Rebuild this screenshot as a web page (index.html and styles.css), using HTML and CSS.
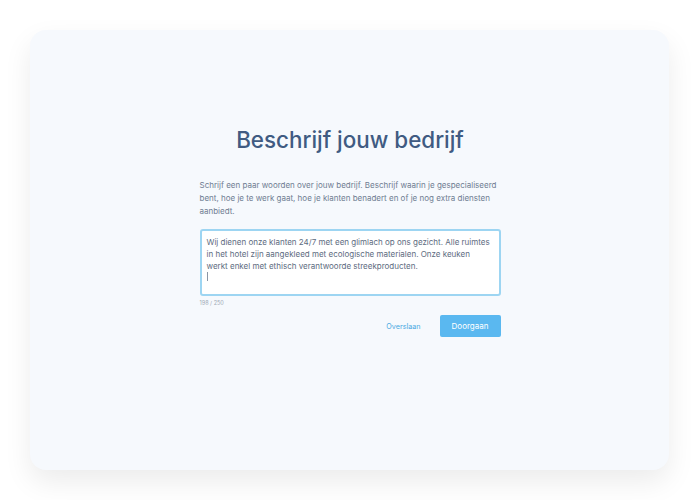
FILE: index.html
```html
<!DOCTYPE html>
<html lang="nl">

<head>
    <meta charset="UTF-8">
    <meta name="viewport" content="width=device-width, initial-scale=1.0">
    <title>Beschrijf jouw bedrijf</title>
    <link rel="stylesheet" href="styles.css">
</head>

<body>
    <div class="page">
        <div class="card">
            <div class="step">
                <h1>Beschrijf jouw bedrijf</h1>
                <p class="intro">Schrijf een paar woorden over jouw bedrijf. Beschrijf waarin je gespecialiseerd bent, hoe je te werk gaat, hoe je klanten benadert en of je nog extra diensten aanbiedt.</p>

                <div class="field">
                    <textarea class="description" maxlength="250">Wij dienen onze klanten 24/7 met een glimlach op ons gezicht. Alle ruimtes
in het hotel zijn aangekleed met ecologische materialen. Onze keuken
werkt enkel met ethisch verantwoorde streekproducten.
</textarea>
                    <span class="caret"></span>
                </div>
                <div class="counter">198 / 250</div>

                <div class="actions">
                    <button class="secondary" type="button">Overslaan</button>
                    <button class="primary" type="button">Doorgaan</button>
                </div>
            </div>
        </div>
    </div>
</body>

</html>
```

FILE: styles.css
```css
body {
    margin: 0;
    font-family: Inter, Lato, sans-serif;
    background: #fff;
    color: #6b7a90;
}

.page {
    padding: 30px 31px 30px 30px;
}

.card {
    height: 440px;
    background-color: #f6f9fd;
    border-radius: 16px;
    box-shadow: 0 12px 28px rgba(0, 0, 0, 0.08);
    display: flex;
    justify-content: center;
}

.step {
    width: 301px;
    padding-top: 96px;
    margin-left: 1px;
}

.step h1 {
    margin: 0 0 25px;
    text-align: center;
    color: #405b82;
    font-size: 22.4px;
    font-weight: 500;
    line-height: 28px;
}

.intro {
    margin: 0 0 11px;
    font-size: 8px;
    line-height: 13px;
    color: #6f7d92;
}

.field {
    position: relative;
}

.description {
    display: block;
    box-sizing: border-box;
    width: 100%;
    height: 67px;
    padding: 5px 2px 5px 5px;
    border: 2px solid #9dd5f2;
    border-radius: 3px;
    background: #fff;
    font-family: inherit;
    font-size: 8px;
    line-height: 12px;
    color: #5d6b80;
    resize: none;
    outline: none;
}

/* text cursor on the empty last line */
.caret {
    position: absolute;
    left: 7px;
    top: 43px;
    width: 1px;
    height: 9px;
    background: #8b95a5;
}

.counter {
    margin-top: 3px;
    font-size: 5.5px;
    line-height: 8px;
    color: #a0a9b6;
}

.actions {
    display: flex;
    justify-content: flex-end;
    align-items: center;
    gap: 19px;
    margin-top: 8px;
}

.actions button {
    font-family: inherit;
    border: none;
    cursor: pointer;
}

.secondary {
    background: none;
    color: #4aa9e2;
    font-size: 7.2px;
    padding: 0;
}

.primary {
    width: 61px;
    height: 22px;
    border-radius: 2px;
    background-color: #5ab8f0;
    color: #fff;
    font-size: 8px;
}
```
